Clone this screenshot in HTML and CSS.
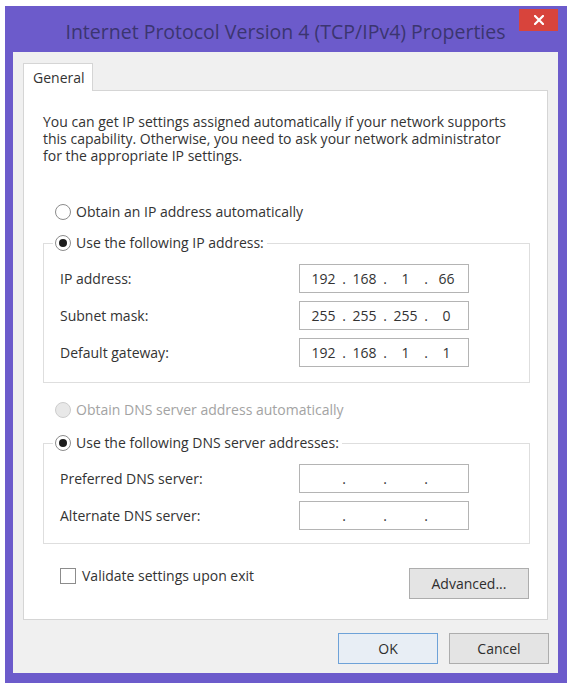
FILE: index.html
```html
<!DOCTYPE html>
<html>
<head>
<meta charset="utf-8">
<link rel="stylesheet" href="styles.css">
</head>
<body>
<div class="window">
  <div class="titlebar">
    <div></div>
    <div class="title">Internet Protocol Version 4 (TCP/IPv4) Properties</div>
    <div class="close"><svg width="10" height="10" viewBox="0 0 10 10"><path d="M1 1 L9 9 M9 1 L1 9" stroke="#fff" stroke-width="2.2" stroke-linecap="square"/></svg></div>
  </div>
  <div class="client">
    <div class="tabs"><div class="tab">General</div></div>
    <div class="panel">
      <div class="intro">
        <div class="line">You can get IP settings assigned automatically if your network supports</div>
        <div class="line">this capability. Otherwise, you need to ask your network administrator</div>
        <div class="line">for the appropriate IP settings.</div>
      </div>

      <div class="option first"><span class="radio"></span><span>Obtain an IP address automatically</span></div>
      <fieldset class="group">
        <legend><span class="radio checked"></span><span>Use the following IP address:</span></legend>
        <div class="rows">
          <span class="lbl">IP address:</span>
          <div class="ipbox"><span class="oct">192</span><span class="dot">.</span><span class="oct">168</span><span class="dot">.</span><span class="oct">1</span><span class="dot">.</span><span class="oct">66</span></div>
          <span class="lbl">Subnet mask:</span>
          <div class="ipbox"><span class="oct">255</span><span class="dot">.</span><span class="oct">255</span><span class="dot">.</span><span class="oct">255</span><span class="dot">.</span><span class="oct">0</span></div>
          <span class="lbl">Default gateway:</span>
          <div class="ipbox"><span class="oct">192</span><span class="dot">.</span><span class="oct">168</span><span class="dot">.</span><span class="oct">1</span><span class="dot">.</span><span class="oct">1</span></div>
        </div>
      </fieldset>

      <div class="option disabled dns-auto"><span class="radio"></span><span>Obtain DNS server address automatically</span></div>
      <fieldset class="group dns">
        <legend><span class="radio checked"></span><span>Use the following DNS server addresses:</span></legend>
        <div class="rows">
          <span class="lbl">Preferred DNS server:</span>
          <div class="ipbox"><span class="oct"></span><span class="dot">.</span><span class="oct"></span><span class="dot">.</span><span class="oct"></span><span class="dot">.</span><span class="oct"></span></div>
          <span class="lbl">Alternate DNS server:</span>
          <div class="ipbox"><span class="oct"></span><span class="dot">.</span><span class="oct"></span><span class="dot">.</span><span class="oct"></span><span class="dot">.</span><span class="oct"></span></div>
        </div>
      </fieldset>

      <div class="bottom-row">
        <div class="check"><span class="box"></span><span>Validate settings upon exit</span></div>
        <div class="btn advanced">Advanced...</div>
      </div>
    </div>
    <div class="actions">
      <div class="btn ok">OK</div>
      <div class="btn">Cancel</div>
    </div>
  </div>
</div>
</body>
</html>
```

FILE: styles.css
```css
* { box-sizing: border-box; }
html, body { margin: 0; padding: 0; background: #ffffff; }
body {
  font-family: "Open Sans", "Liberation Sans", sans-serif;
  font-size: 14px;
  color: #333333;
}
.window {
  margin: 6px 0 0 5px;
  width: 562px;
  height: 677px;
  background: #6c5bcb;
  padding: 0 9px 10px 8px;
  display: flex;
  flex-direction: column;
}
.titlebar {
  height: 46px;
  display: grid;
  grid-template-columns: 1fr auto 1fr;
  align-items: start;
}
.title {
  margin-top: 13px;
  line-height: 26px;
  font-size: 19.5px;
  color: #3b3570;
  white-space: nowrap;
}
.close {
  justify-self: end;
  margin-top: 3px;
  width: 39px;
  height: 22px;
  background: #d8443c;
  display: flex;
  align-items: center;
  justify-content: center;
}
.client {
  flex: 1;
  background: #f0f0f0;
  padding: 11px 10px 0 10px;
}
.tabs { display: flex; }
.tab {
  position: relative;
  z-index: 1;
  width: 70px;
  height: 28px;
  margin-bottom: -1px;
  background: #ffffff;
  border: 1px solid #d5d5d5;
  border-bottom: none;
  padding-left: 9px;
  line-height: 28px;
}
.panel {
  background: #ffffff;
  border: 1px solid #d5d5d5;
  padding: 22px 17px 20px 19px;
}
.intro {
  display: flex;
  flex-direction: column;
  white-space: nowrap;
}
.intro .line {
  height: 17px;
  line-height: 17px;
}
.option {
  display: flex;
  align-items: center;
  gap: 5px;
  padding-left: 12px;
  line-height: 16px;
}
.option.first { margin-top: 40px; }
.option.dns-auto { margin-top: 19px; }
.option.disabled { color: #a3a3a3; }
.radio {
  width: 16px;
  height: 16px;
  border-radius: 50%;
  border: 1px solid #8c8c8c;
  background: #ffffff;
  display: flex;
  align-items: center;
  justify-content: center;
  flex: none;
}
.radio.checked::after {
  content: "";
  width: 8px;
  height: 8px;
  border-radius: 50%;
  background: #1c1c1c;
}
.option.disabled .radio {
  border-color: #cdcdcd;
  background: #e8e8e8;
}
.group {
  margin: 13px 0 0 0;
  border: 1px solid #dedede;
  padding: 11px 60px 15px 16px;
  min-width: 0;
}
.group.dns {
  margin-top: 15px;
  padding-bottom: 13px;
}
.group legend {
  margin-left: -7px;
  padding: 0 3px 0 2px;
  line-height: 20px;
  display: flex;
  align-items: center;
  gap: 5px;
}
.rows {
  display: grid;
  grid-template-columns: 1fr 170px;
  row-gap: 8px;
  align-items: center;
}
.ipbox {
  height: 29px;
  border: 1px solid #b4b4b4;
  background: #ffffff;
  display: flex;
  align-items: center;
  padding-left: 7px;
}
.oct {
  width: 33px;
  text-align: center;
}
.dot {
  width: 8px;
  text-align: center;
}
.bottom-row {
  margin-top: 24px;
  display: flex;
  justify-content: space-between;
  align-items: flex-start;
}
.check {
  display: flex;
  align-items: center;
  gap: 6px;
  padding-left: 17px;
  line-height: 16px;
}
.box {
  width: 16px;
  height: 16px;
  border: 1px solid #8c8c8c;
  background: #ffffff;
}
.btn {
  height: 31px;
  width: 100px;
  border: 1px solid #adadad;
  background: #e4e4e4;
  display: flex;
  align-items: center;
  justify-content: center;
  color: #2e2e2e;
}
.btn.advanced {
  width: 120px;
  margin-right: 1px;
}
.actions {
  margin-top: 13px;
  margin-right: -1px;
  display: flex;
  justify-content: flex-end;
  gap: 11px;
}
.btn.ok {
  border-color: #6ea2d8;
  background: #e8eef5;
}
```
